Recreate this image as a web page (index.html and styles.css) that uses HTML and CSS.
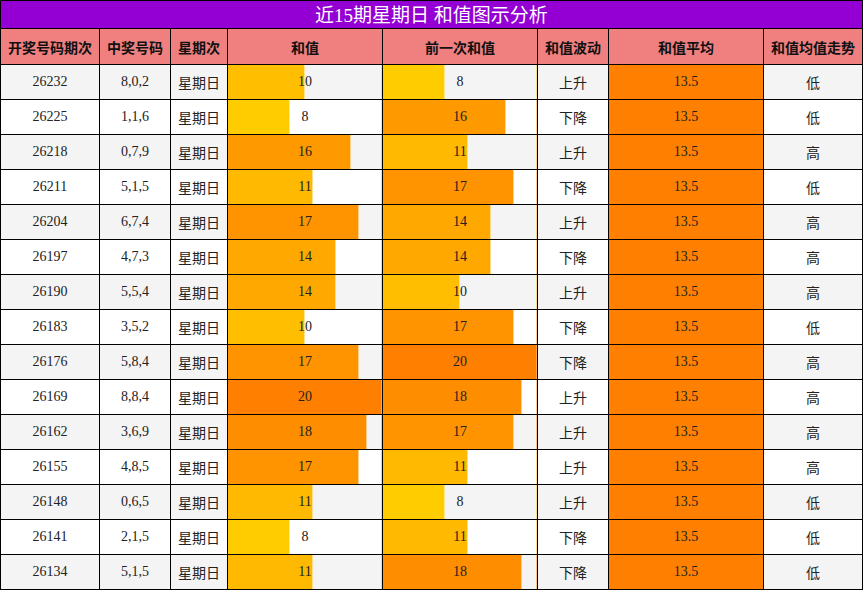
FILE: index.html
```html
<!DOCTYPE html>
<html lang="zh">
<head>
<meta charset="utf-8">
<title>近15期星期日 和值图示分析</title>
<link rel="stylesheet" href="styles.css">
</head>
<body>
<div class="table">
  <div class="title">近15期星期日 和值图示分析</div>
  <div class="row head">
    <div class="c">开奖号码期次</div><div class="c">中奖号码</div><div class="c">星期次</div><div class="c">和值</div><div class="c">前一次和值</div><div class="c">和值波动</div><div class="c">和值平均</div><div class="c">和值均值走势</div>
  </div>
  <div class="row odd"><div class="c">26232</div><div class="c">8,0,2</div><div class="c">星期日</div><div class="c bar" style="--v:50%;--c:#ffbf00">10</div><div class="c bar" style="--v:40%;--c:#ffcc00">8</div><div class="c">上升</div><div class="c avg">13.5</div><div class="c">低</div></div>
  <div class="row"><div class="c">26225</div><div class="c">1,1,6</div><div class="c">星期日</div><div class="c bar" style="--v:40%;--c:#ffcc00">8</div><div class="c bar" style="--v:80%;--c:#ff9900">16</div><div class="c">下降</div><div class="c avg">13.5</div><div class="c">低</div></div>
  <div class="row odd"><div class="c">26218</div><div class="c">0,7,9</div><div class="c">星期日</div><div class="c bar" style="--v:80%;--c:#ff9900">16</div><div class="c bar" style="--v:55%;--c:#ffb900">11</div><div class="c">上升</div><div class="c avg">13.5</div><div class="c">高</div></div>
  <div class="row"><div class="c">26211</div><div class="c">5,1,5</div><div class="c">星期日</div><div class="c bar" style="--v:55%;--c:#ffb900">11</div><div class="c bar" style="--v:85%;--c:#ff9300">17</div><div class="c">下降</div><div class="c avg">13.5</div><div class="c">低</div></div>
  <div class="row odd"><div class="c">26204</div><div class="c">6,7,4</div><div class="c">星期日</div><div class="c bar" style="--v:85%;--c:#ff9300">17</div><div class="c bar" style="--v:70%;--c:#ffa800">14</div><div class="c">上升</div><div class="c avg">13.5</div><div class="c">高</div></div>
  <div class="row"><div class="c">26197</div><div class="c">4,7,3</div><div class="c">星期日</div><div class="c bar" style="--v:70%;--c:#ffa800">14</div><div class="c bar" style="--v:70%;--c:#ffa800">14</div><div class="c">下降</div><div class="c avg">13.5</div><div class="c">高</div></div>
  <div class="row odd"><div class="c">26190</div><div class="c">5,5,4</div><div class="c">星期日</div><div class="c bar" style="--v:70%;--c:#ffa800">14</div><div class="c bar" style="--v:50%;--c:#ffbf00">10</div><div class="c">上升</div><div class="c avg">13.5</div><div class="c">高</div></div>
  <div class="row"><div class="c">26183</div><div class="c">3,5,2</div><div class="c">星期日</div><div class="c bar" style="--v:50%;--c:#ffbf00">10</div><div class="c bar" style="--v:85%;--c:#ff9300">17</div><div class="c">下降</div><div class="c avg">13.5</div><div class="c">低</div></div>
  <div class="row odd"><div class="c">26176</div><div class="c">5,8,4</div><div class="c">星期日</div><div class="c bar" style="--v:85%;--c:#ff9300">17</div><div class="c bar" style="--v:100%;--c:#ff8000">20</div><div class="c">下降</div><div class="c avg">13.5</div><div class="c">高</div></div>
  <div class="row"><div class="c">26169</div><div class="c">8,8,4</div><div class="c">星期日</div><div class="c bar" style="--v:100%;--c:#ff8000">20</div><div class="c bar" style="--v:90%;--c:#ff8d00">18</div><div class="c">上升</div><div class="c avg">13.5</div><div class="c">高</div></div>
  <div class="row odd"><div class="c">26162</div><div class="c">3,6,9</div><div class="c">星期日</div><div class="c bar" style="--v:90%;--c:#ff8d00">18</div><div class="c bar" style="--v:85%;--c:#ff9300">17</div><div class="c">上升</div><div class="c avg">13.5</div><div class="c">高</div></div>
  <div class="row"><div class="c">26155</div><div class="c">4,8,5</div><div class="c">星期日</div><div class="c bar" style="--v:85%;--c:#ff9300">17</div><div class="c bar" style="--v:55%;--c:#ffb900">11</div><div class="c">上升</div><div class="c avg">13.5</div><div class="c">高</div></div>
  <div class="row odd"><div class="c">26148</div><div class="c">0,6,5</div><div class="c">星期日</div><div class="c bar" style="--v:55%;--c:#ffb900">11</div><div class="c bar" style="--v:40%;--c:#ffcc00">8</div><div class="c">上升</div><div class="c avg">13.5</div><div class="c">低</div></div>
  <div class="row"><div class="c">26141</div><div class="c">2,1,5</div><div class="c">星期日</div><div class="c bar" style="--v:40%;--c:#ffcc00">8</div><div class="c bar" style="--v:55%;--c:#ffb900">11</div><div class="c">下降</div><div class="c avg">13.5</div><div class="c">低</div></div>
  <div class="row odd"><div class="c">26134</div><div class="c">5,1,5</div><div class="c">星期日</div><div class="c bar" style="--v:55%;--c:#ffb900">11</div><div class="c bar" style="--v:90%;--c:#ff8d00">18</div><div class="c">下降</div><div class="c avg">13.5</div><div class="c">低</div></div>
</div>
</body>
</html>
```
FILE: styles.css
```css
html, body {
  margin: 0;
  padding: 0;
  background: #fff;
}

.table {
  width: 863px;
  box-sizing: border-box;
  background: #000;
  padding: 1px;
  display: flex;
  flex-direction: column;
  gap: 1px;
  font-family: "Liberation Serif", "Noto Sans CJK SC", serif;
  font-size: 14px;
  color: #222;
}

.title {
  height: 27px;
  box-sizing: border-box;
  padding-top: 2px;
  background: #9400d3;
  color: #fff;
  font-size: 19px;
  line-height: 25px;
  text-align: center;
}

.row {
  display: grid;
  grid-template-columns: 98px 70px 56px 154px 154px 70px 154px 98px;
  gap: 1px;
  height: 34px;
}

.c {
  background: #fff;
  display: flex;
  align-items: center;
  justify-content: center;
  white-space: nowrap;
}

.row.odd .c {
  background-color: #f4f4f4;
}

.row.head {
  height: 35px;
}

.row.head .c {
  background: #f08080;
  font-weight: bold;
  color: #111;
  font-family: "Noto Sans CJK SC", sans-serif;
}

.row .c.bar {
  background-image: linear-gradient(to right,
    var(--c) calc(var(--v) - 1px),
    color-mix(in srgb, var(--c) 45%, #fff) calc(var(--v) - 1px),
    color-mix(in srgb, var(--c) 45%, #fff) var(--v),
    transparent var(--v));
  box-shadow: inset -1px 0 0 color-mix(in srgb, var(--c) 45%, transparent);
}

.row .c.avg {
  background: #ff8000;
}
```
